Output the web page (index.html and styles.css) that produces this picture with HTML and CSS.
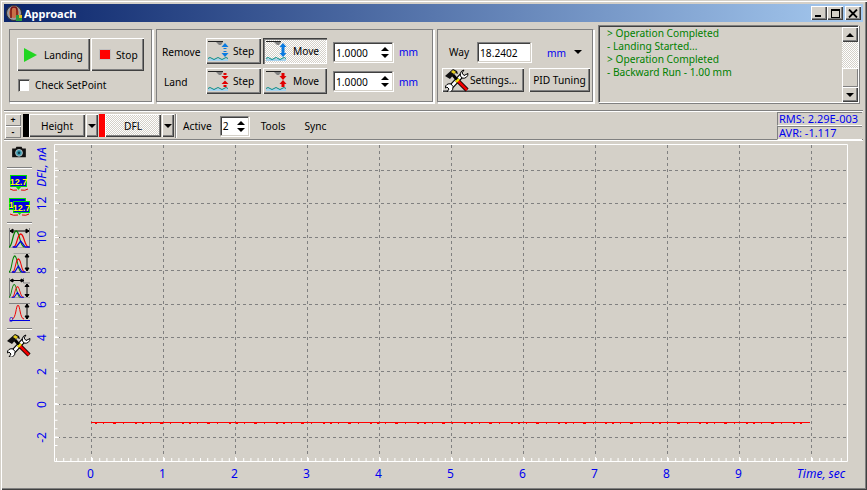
FILE: index.html
```html
<!DOCTYPE html>
<html lang="en">
<head>
<meta charset="utf-8">
<title>Approach</title>
<link rel="stylesheet" href="styles.css">
</head>
<body>
<svg class="defs" width="0" height="0">
  <defs>
    <g id="tools">
      <path d="M4 20 L18 5" stroke="#000" stroke-width="5" fill="none"/>
      <path d="M4 20 L18 5" stroke="#fff" stroke-width="2.600" fill="none"/>
      <path d="M17 9 a4.500 4.500 0 0 1 2-8 l-2 3 2 2.500 4-2 a4.500 4.500 0 0 1 -6 4.500z" fill="#fff" stroke="#000"/>
      <path d="M6 15 a4.500 4.500 0 0 1 -4 8 l2-3 -2-2 -2 1 a4.500 4.500 0 0 1 6-4z" fill="#fff" stroke="#000"/>
      <path d="M0 7 L8 0 L12 2 L13 5 L10 4 L5 10 Z" fill="#111"/>
      <path d="M8 1 L11 3 L9 5 L6 3Z" fill="#e8d020"/>
      <path d="M8 6 L14 13" stroke="#000" stroke-width="3" fill="none"/>
      <path d="M12 11 L22 21" stroke="#000" stroke-width="4.400" fill="none"/>
      <path d="M13 12 L22 21" stroke="#f00000" stroke-width="2.600" fill="none"/>
      <path d="M11 13 L14 10" stroke="#f0e000" stroke-width="2.400" fill="none"/>
    </g>
    <g id="scene">
      <path d="M1 2.500 H16" stroke="#222" stroke-width="1"/>
      <path d="M9 3 H16 L14 6 H12Z" fill="#808080"/>
      <path d="M1 20 H21 V22 H1Z" fill="#a6d2ee"/>
      <path d="M1 19.500 q2 -2 4 0 t4 0 t4 0 t4 0 t4 0" stroke="#008b8b" fill="none"/>
    </g>
    <g id="arrowsSolidBlue" fill="#0a7ae0">
      <use href="#scene"/>
      <path d="M18 4 L21.500 8 H19.500 V11 H16.500 V8 H14.500Z"/>
      <path d="M18 18 L21.500 14 H19.500 V11 H16.500 V14 H14.500Z"/>
    </g>
    <g id="arrowsDashBlue" fill="#0a7ae0">
      <use href="#scene"/>
      <path d="M18 4 L21.500 8 H14.500Z"/>
      <path d="M18 18 L21.500 14 H14.500Z"/>
      <path d="M16.500 9 H19.500 V10 H16.500Z M16.500 12 H19.500 V13 H16.500Z"/>
    </g>
    <g id="arrowsSolidRed" fill="#e00000">
      <use href="#scene"/>
      <path d="M18 11 L21.500 7 H19.500 V4 H16.500 V7 H14.500Z"/>
      <path d="M18 11 L21.500 15 H19.500 V18 H16.500 V15 H14.500Z"/>
    </g>
    <g id="arrowsDashRed" fill="#e00000">
      <use href="#scene"/>
      <path d="M16.500 4 H19.500 V6 H16.500Z"/>
      <path d="M18 10.500 L21.500 7 H14.500Z M18 11.500 L21.500 15 H14.500Z"/>
      <path d="M16.500 16 H19.500 V18 H16.500Z"/>
    </g>
    <g id="peaks" fill="none" stroke-width="1.300">
      <path d="M0 20 C4 20 4 4 8 4 C12 4 12 20 17 20" stroke="#008000"/>
      <path d="M5 20 C9 20 9 7 13 7 C17 7 17 20 22 20" stroke="#f00000"/>
      <path d="M4 20 H8 L13 14 L18 20 H23" stroke="#0000e0"/>
    </g>
    <g id="big127">
      <rect x="0.500" y="0.500" width="16" height="11" fill="#0000e0" stroke="#00e000"/>
      <text x="8.500" y="9.500" class="lcd">12.7</text>
    </g>
  </defs>
</svg>

<div class="window">
  <header class="titlebar">
    <svg class="appicon" width="17" height="18" viewBox="0 0 17 18">
      <circle cx="8" cy="9" r="7.500" fill="#9a9aa0" stroke="#333"/>
      <circle cx="8" cy="9" r="5" fill="#c87048"/>
      <path d="M5 14 V6 a3 3 0 0 1 6 0 V14" fill="none" stroke="#7a1010" stroke-width="1.500"/>
      <rect x="10" y="11" width="6" height="6" fill="#2a9a40"/>
      <rect x="13" y="11" width="3" height="3" fill="#e8c020"/>
    </svg>
    <span class="titletext">Approach</span>
    <div class="winbtns">
      <span class="winbtn"><i class="g-min"></i></span>
      <span class="winbtn"><i class="g-max"></i></span>
      <span class="winbtn close"><svg width="10" height="9" viewBox="0 0 10 9"><path d="M1 0.500 L9 8.500 M9 0.500 L1 8.500" stroke="#000" stroke-width="1.800"/></svg></span>
    </div>
  </header>

  <section class="top">
    <div class="panel p-landing">
      <div class="hrow">
        <button class="btn b-landing"><svg width="13" height="14" viewBox="0 0 13 14"><path d="M0 0 L13 7 L0 14Z" fill="#22d622"/></svg><span>Landing</span></button>
        <button class="btn b-stop"><i class="stopbox"></i><span>Stop</span></button>
      </div>
      <label class="check"><i class="checkbox"></i><span>Check SetPoint</span></label>
    </div>

    <div class="panel p-move">
      <div class="mrow first">
        <span class="mlabel">Remove</span>
        <button class="btn b-step"><svg width="23" height="24" viewBox="0 0 23 24"><use href="#arrowsDashBlue"/></svg><span>Step</span></button>
        <button class="btn b-move on"><svg width="23" height="24" viewBox="0 0 23 24"><use href="#arrowsSolidBlue"/></svg><span>Move</span></button>
        <div class="field f-mm"><span>1.0000</span><i class="spin"><b class="up"></b><b class="dn"></b></i></div>
        <span class="unit">mm</span>
      </div>
      <div class="mrow">
        <span class="mlabel land">Land</span>
        <button class="btn b-step"><svg width="23" height="24" viewBox="0 0 23 24"><use href="#arrowsDashRed"/></svg><span>Step</span></button>
        <button class="btn b-move"><svg width="23" height="24" viewBox="0 0 23 24"><use href="#arrowsSolidRed"/></svg><span>Move</span></button>
        <div class="field f-mm"><span>1.0000</span><i class="spin"><b class="up"></b><b class="dn"></b></i></div>
        <span class="unit">mm</span>
      </div>
    </div>

    <div class="panel p-way">
      <div class="wrow">
        <span class="waylabel">Way</span>
        <div class="field f-way"><span>18.2402</span></div>
        <span class="unit wayunit">mm</span>
        <b class="dn wayarrow"></b>
      </div>
      <div class="wrow second">
        <button class="btn b-settings"><svg width="24" height="23" viewBox="0 0 24 23"><use href="#tools"/></svg><span>Settings...</span></button>
        <button class="btn b-pid">PID Tuning</button>
      </div>
    </div>

    <div class="log">
      <div class="logtext">
        <div>&gt; Operation Completed</div>
        <div>- Landing Started...</div>
        <div>&gt; Operation Completed</div>
        <div>- Backward Run - 1.00 mm</div>
      </div>
      <div class="scroll">
        <span class="sbtn"><b class="up"></b></span>
        <span class="strack"></span>
        <span class="sthumb"></span>
        <span class="sbtn"><b class="dn"></b></span>
      </div>
    </div>
  </section>

  <section class="bar">
    <div class="plusminus"><span class="pm">+</span><span class="pm">-</span></div>
    <i class="swatch black"></i>
    <button class="btn b-chan">Height</button>
    <span class="btn b-drop"><b class="dn"></b></span>
    <i class="swatch red"></i>
    <button class="btn b-chan dither">DFL</button>
    <span class="btn b-drop"><b class="dn"></b></span>
    <div class="barsep"></div>
    <span class="barlabel">Active</span>
    <div class="field f-active"><span>2</span><i class="spin"><b class="up"></b><b class="dn"></b></i></div>
    <span class="barlabel tools">Tools</span>
    <span class="barlabel sync">Sync</span>
    <div class="stats">
      <div class="stat">RMS: 2.29E-003</div>
      <div class="stat">AVR: -1.117</div>
    </div>
  </section>

  <section class="main">
    <aside class="side">
      <svg class="ic cam" width="16" height="12" viewBox="0 0 18 14">
        <path d="M1 3 H5 L6 1 H12 L13 3 H17 V13 H1Z" fill="#111"/>
        <circle cx="9" cy="8" r="4" fill="#3a9ab0" stroke="#ccc"/>
        <circle cx="9" cy="8" r="1.500" fill="#0c4050"/>
      </svg>
      <hr class="sep">
      <svg class="ic i127" width="20" height="17" viewBox="0 0 20 17">
        <use href="#big127" x="1"/>
        <path d="M1 14 Q4 16 8 15 M12 15 Q16 16 19 14" stroke="#e00000" fill="none"/>
        <path d="M7 12 H12 L9.500 15Z" fill="#00e000"/>
      </svg>
      <svg class="ic i127b" width="21" height="19" viewBox="0 0 21 19">
        <use href="#big127" x="0" y="0"/>
        <use href="#big127" x="4" y="3"/>
        <path d="M1 16 Q4 18 9 17 M13 17 Q17 18 20 16" stroke="#e00000" fill="none"/>
        <path d="M8 14 H13 L10.500 17Z" fill="#00e000"/>
      </svg>
      <hr class="sep s2">
      <svg class="ic z1" width="21" height="20" viewBox="0 0 21 20">
        <path d="M0.500 0 V20 H21 M20.500 0 V20" stroke="#808080" fill="none"/>
        <path d="M1 3 H20 M1 3 L4 1 V5Z M20 3 L17 1 V5Z" stroke="#000" fill="#000"/>
        <g transform="translate(0,-1) scale(.9,1)"><use href="#peaks"/></g>
      </svg>
      <svg class="ic z2" width="21" height="20" viewBox="0 0 21 20">
        <path d="M4.500 0 H21 M0 19.500 H21" stroke="#808080" fill="none"/>
        <path d="M18 1 V18 M18 1 L16 4 H20Z M18 18 L16 15 H20Z" stroke="#000" fill="#000"/>
        <g transform="scale(.72,1) translate(0,-1)"><use href="#peaks"/></g>
      </svg>
      <svg class="ic z3" width="21" height="20" viewBox="0 0 21 20">
        <path d="M0.500 0 V20 H21 M14.500 0 V5 H21" stroke="#808080" fill="none"/>
        <path d="M1 2.500 H15 M1 2.500 L4 1 V4Z M15 2.500 L12 1 V4Z" stroke="#000" fill="#000"/>
        <path d="M18 6 V19 M18 6 L16 8.500 H20Z M18 19 L16 16.500 H20Z" stroke="#000" fill="#000"/>
        <g transform="scale(.65,.8) translate(0,4)"><use href="#peaks"/></g>
      </svg>
      <svg class="ic z4" width="21" height="19" viewBox="0 0 21 19">
        <path d="M0 0.500 H21" stroke="#808080"/>
        <path d="M3 16 C7 16 7 2 9 2 C11 2 11 16 15 16" stroke="#f00000" fill="none"/>
        <path d="M1 17.500 H21" stroke="#0000e0"/>
        <path d="M18 1 V16 M18 1 L16 4 H20Z M18 16 L16 13 H20Z" stroke="#000" fill="#000"/>
        <text x="0" y="19" class="zero">0</text>
      </svg>
      <hr class="sep s3">
      <svg class="ic wrench" width="24" height="23" viewBox="0 0 24 23"><use href="#tools"/></svg>
    </aside>

    <svg class="plot" width="829" height="348" viewBox="34 140 829 348">
      <g class="grid">
        <line x1="91.500" y1="145" x2="91.500" y2="460"/><line x1="163.500" y1="145" x2="163.500" y2="460"/>
        <line x1="235.500" y1="145" x2="235.500" y2="460"/><line x1="307.500" y1="145" x2="307.500" y2="460"/>
        <line x1="379.500" y1="145" x2="379.500" y2="460"/><line x1="451.500" y1="145" x2="451.500" y2="460"/>
        <line x1="523.500" y1="145" x2="523.500" y2="460"/><line x1="595.500" y1="145" x2="595.500" y2="460"/>
        <line x1="667.500" y1="145" x2="667.500" y2="460"/><line x1="739.500" y1="145" x2="739.500" y2="460"/>
        <line x1="811.500" y1="145" x2="811.500" y2="460"/>
        <line x1="57" y1="170.500" x2="846" y2="170.500"/><line x1="57" y1="203.500" x2="846" y2="203.500"/>
        <line x1="57" y1="237.500" x2="846" y2="237.500"/><line x1="57" y1="270.500" x2="846" y2="270.500"/>
        <line x1="57" y1="304.500" x2="846" y2="304.500"/><line x1="57" y1="337.500" x2="846" y2="337.500"/>
        <line x1="57" y1="371.500" x2="846" y2="371.500"/><line x1="57" y1="404.500" x2="846" y2="404.500"/>
        <line x1="57" y1="437.500" x2="846" y2="437.500"/>
      </g>
      <path class="frame" d="M54.500 144.500 H847.500 V461.500 H54.500Z"/>
      <line class="tickx" x1="55" y1="459.500" x2="847" y2="459.500"/>
      <line class="ticky" x1="56" y1="446" x2="56" y2="145"/>
      <path class="major" d="M91.500 457 V461 M163.500 457 V461 M235.500 457 V461 M307.500 457 V461 M379.500 457 V461 M451.500 457 V461 M523.500 457 V461 M595.500 457 V461 M667.500 457 V461 M739.500 457 V461 M811.500 457 V461 M55 170.500 H59 M55 203.500 H59 M55 237.500 H59 M55 270.500 H59 M55 304.500 H59 M55 337.500 H59 M55 371.500 H59 M55 404.500 H59 M55 437.500 H59"/>
      <path class="signal" d="M91 422.500 H810"/>
      <line class="noise" x1="95" y1="423.500" x2="808" y2="423.500"/>
      <g class="ylab">
        <text transform="translate(46,203.500) rotate(-90)">12</text>
        <text transform="translate(46,237.500) rotate(-90)">10</text>
        <text transform="translate(46,270.500) rotate(-90)">8</text>
        <text transform="translate(46,304.500) rotate(-90)">6</text>
        <text transform="translate(46,337.500) rotate(-90)">4</text>
        <text transform="translate(46,371.500) rotate(-90)">2</text>
        <text transform="translate(46,404.500) rotate(-90)">0</text>
        <text transform="translate(46,437.500) rotate(-90)">-2</text>
        <text class="it" transform="translate(46,167) rotate(-90)">DFL, nA</text>
      </g>
      <g class="xlab">
        <text x="90.500" y="478">0</text><text x="162.500" y="478">1</text><text x="234.500" y="478">2</text>
        <text x="306.500" y="478">3</text><text x="378.500" y="478">4</text><text x="450.500" y="478">5</text>
        <text x="522.500" y="478">6</text><text x="594.500" y="478">7</text><text x="666.500" y="478">8</text>
        <text x="738.500" y="478">9</text>
        <text class="it" x="821" y="478">Time, sec</text>
      </g>
    </svg>
  </section>
</div>
</body>
</html>
```
FILE: styles.css
```css
* { box-sizing: border-box; }
html, body { margin: 0; padding: 0; }
body { width: 867px; height: 490px; overflow: hidden; background: #d4d0c8; }
.defs { position: absolute; }
.window {
  width: 867px; height: 490px; padding: 4px 4px 2px;
  background: #d4d0c8;
  font: 10.2px "Noto Sans", sans-serif; color: #000;
  box-shadow: inset 1px 1px 0 #d4d0c8, inset 2px 2px 0 #fff, inset -1px -1px 0 #404040, inset -2px -2px 0 #808080;
  display: flex; flex-direction: column;
}
i { display: block; font-style: normal; }
.titlebar {
  height: 18px; flex: none; display: flex; align-items: center; padding-left: 2px;
  background: linear-gradient(90deg, #0a246a, #a6caf0);
}
.appicon { flex: none; }
.titletext { color: #fff; font: bold 11px "Noto Sans", sans-serif; margin-left: 1px; }
.winbtns { margin-left: auto; margin-right: 2px; display: flex; }
.winbtn {
  width: 16px; height: 14px; background: #d4d0c8; position: relative;
  box-shadow: inset 1px 1px 0 #fff, inset -1px -1px 0 #404040, inset -2px -2px 0 #808080;
  display: flex; align-items: center; justify-content: center;
}
.winbtn.close { margin-left: 2px; }
.g-min { width: 6px; height: 2px; background: #000; margin: 6px 3px 0 0; }
.g-max { width: 9px; height: 9px; border: 1px solid #000; border-top-width: 2px; }

.top {
  height: 89px; flex: none; display: flex; align-items: flex-start; padding: 7px 0 0 5px;
  border-bottom: 1px solid #808080; box-shadow: 0 1px 0 #fff;
}
.panel {
  height: 74px; flex: none; margin-right: 3px;
  border: 1px solid #808080; border-right-color: #fff; border-bottom-color: #fff;
  box-shadow: 1px 1px 0 #fff, inset -1px -1px 0 #808080;
}
.p-landing { width: 144px; padding: 8px 0 0 7px; }
.p-move { width: 278px; padding: 8px 0 0 5px; }
.p-way { width: 157px; padding: 12px 0 0 4px; }
.hrow { display: flex; gap: 1px; }
.btn {
  font: inherit; color: #000; padding: 0; margin: 0; border: 0; background: #d4d0c8;
  display: flex; align-items: center; flex: none;
  box-shadow: inset 1px 1px 0 #fff, inset -1px -1px 0 #404040, inset -2px -2px 0 #808080;
}
.b-landing { width: 73px; height: 33px; padding-left: 7px; }
.b-landing span { margin-left: 7px; }
.b-stop { width: 53px; height: 33px; padding-left: 8px; }
.b-stop span { margin-left: 5px; }
.stopbox { width: 12px; height: 11px; background: #f00; border: 1px solid #c0c0c0; flex: none; }
.check { display: flex; align-items: center; margin-top: 7px; margin-left: 1px; }
.checkbox {
  width: 12px; height: 13px; background: #fff; margin-right: 5px; flex: none;
  border: 1px solid #808080; border-right-color: #d4d0c8; border-bottom-color: #d4d0c8;
  box-shadow: inset 1px 1px 0 #404040;
}
.mrow { display: flex; align-items: center; height: 26px; }
.mrow + .mrow { margin-top: 4px; }
.mlabel { width: 44px; flex: none; padding-top: 2px; }
.mlabel.land { padding-left: 2px; }
.b-step { width: 55px; height: 26px; padding-left: 1px; }
.b-step span { margin-left: 3px; }
.b-move { width: 64px; height: 26px; margin-left: 2px; padding-left: 2px; }
.b-move span { margin-left: 5px; }
.b-move.on {
  background: repeating-conic-gradient(#fff 0 25%, #d4d0c8 0 50%) 0 0 / 2px 2px;
  box-shadow: inset 1px 1px 0 #404040, inset 2px 2px 0 #808080, inset -1px -1px 0 #fff;
}
.field {
  background: #fff; height: 20px; display: flex; align-items: center; padding: 1px 0 0 2px; flex: none;
  border: 1px solid #808080; border-right-color: #d4d0c8; border-bottom-color: #d4d0c8;
  box-shadow: inset 1px 1px 0 #404040, 1px 1px 0 #fff;
}
.f-mm { width: 60px; margin-left: 6px; }
.first .f-mm { margin-top: 2px; }
.f-way { width: 54px; margin-left: 7px; }
.f-active { width: 29px; margin-left: 8px; }
.spin { margin-left: auto; margin-right: 3px; display: flex; flex-direction: column; gap: 3px; }
.up, .dn { display: block; width: 0; height: 0; border-left: 4px solid transparent; border-right: 4px solid transparent; }
.up { border-bottom: 4px solid #000; }
.dn { border-top: 4px solid #000; }
.unit { color: #0000f0; margin-left: 6px; padding-top: 2px; }
.wrow { display: flex; align-items: center; height: 20px; }
.waylabel { margin-left: 7px; width: 21px; flex: none; }
.wayunit { margin-left: 16px; width: 16px; flex: none; padding-top: 1px; }
.wayarrow { margin-left: 11px; }
.wrow.second { margin-top: 6px; height: 24px; gap: 5px; }
.b-settings { width: 82px; height: 24px; padding-left: 3px; }
.b-settings span { margin-left: 1px; }
.b-pid { width: 61px; height: 24px; justify-content: center; }
.log {
  width: 261px; height: 78px; margin: -4px 0 0 1px; flex: none; display: flex; color: #008000;
  border: 1px solid #808080; border-right-color: #fff; border-bottom-color: #fff;
  box-shadow: inset 1px 1px 0 #404040, 1px 1px 0 #808080;
}
.logtext { flex: 1; padding: 1px 0 0 8px; line-height: 13px; }
.scroll { width: 16px; margin: 1px 0 1px 0; display: flex; flex-direction: column; }
.sbtn {
  height: 15px; background: #d4d0c8; display: flex; align-items: center; justify-content: center; flex: none;
  box-shadow: inset 1px 1px 0 #fff, inset -1px -1px 0 #404040, inset -2px -2px 0 #808080;
}
.strack { height: 26px; flex: none; background: repeating-conic-gradient(#fff 0 25%, #d4d0c8 0 50%) 0 0 / 2px 2px; }
.sthumb { height: 19px; flex: none; background: #d4d0c8; box-shadow: inset 1px 1px 0 #fff, inset -1px -1px 0 #808080; }

.bar {
  height: 29px; flex: none; display: flex; align-items: center; padding: 1px 0 0 1px;
  border-bottom: 1px solid #808080; box-shadow: 0 1px 0 #fff;
}
.plusminus { width: 16px; height: 24px; display: flex; flex-direction: column; margin-right: 2px; flex: none; }
.pm {
  height: 12px; display: flex; align-items: center; justify-content: center; font-weight: bold; font-size: 8.8px; line-height: 12px; overflow: hidden;
  box-shadow: inset 1px 1px 0 #fff, inset -1px -1px 0 #808080;
}
.swatch { width: 6px; height: 23px; flex: none; }
.swatch.black { background: #000; }
.swatch.red { background: #f00; margin-left: 1px; }
.b-chan { width: 56px; height: 23px; justify-content: center; }
.b-chan.dither {
  background: repeating-conic-gradient(#fff 0 25%, #d4d0c8 0 50%) 0 0 / 2px 2px;
}
.b-drop { width: 12px; height: 23px; margin-left: 1px; justify-content: center; }
.barsep { width: 2px; height: 24px; margin-left: 1px; flex: none; border-left: 1px solid #808080; border-right: 1px solid #fff; }
.barlabel { margin-left: 6px; }
.tools { margin-left: 12px; }
.sync { margin-left: 19px; }
.stats { margin-left: auto; width: 85px; align-self: flex-start; margin-right: 1px; color: #0000f0; flex: none; }
.stat { height: 14px; line-height: 12px; padding-left: 1px; border-left: 1px solid #808080; border-top: 1px solid #808080; border-bottom: 1px solid #fff; font-size: 11px; white-space: nowrap; }

.main { flex: 1; display: flex; min-height: 0; }
.side { width: 30px; flex: none; display: flex; flex-direction: column; align-items: center; padding-top: 6px; }
.side .ic { display: block; flex: none; }
.sep { width: 25px; height: 2px; margin: 9px 0 0; border: 0; border-top: 1px solid #808080; border-bottom: 1px solid #fff; flex: none; }
.i127 { margin-top: 6px; }
.i127b { margin-top: 6px; }
.sep.s2 { margin-top: 5px; }
.z1 { margin-top: 4px; }
.z2 { margin-top: 5px; }
.z3 { margin-top: 5px; }
.z4 { margin-top: 5px; }
.sep.s3 { margin-top: 6px; }
.wrench { margin-top: 4px; }
.lcd { font: bold 9px "Liberation Sans", sans-serif; fill: #ffff00; text-anchor: middle; }
.zero { font: italic 7px "Liberation Sans", sans-serif; fill: #0000e0; }

.plot { display: block; flex: none; }
.grid line { stroke: #808080; stroke-width: 1; stroke-dasharray: 3 3; }
.frame { fill: none; stroke: #fff; stroke-width: 1; }
.tickx { stroke: #fff; stroke-width: 3; stroke-dasharray: 1 6.200; stroke-dashoffset: -1; }
.ticky { stroke: #fff; stroke-width: 3; stroke-dasharray: 1 7.400; }
.major { stroke: #fff; stroke-width: 1; fill: none; }
.signal { stroke: #ff0000; stroke-width: 1; fill: none; }
.noise { stroke: #ff0000; stroke-width: 1; stroke-dasharray: 2 6 1 9 3 7 1 11 2 5; }
.ylab text, .xlab text { font: 12px "Noto Sans", sans-serif; fill: #0000f0; text-anchor: middle; }
.ylab .it, .xlab .it { font-style: italic; }
```
